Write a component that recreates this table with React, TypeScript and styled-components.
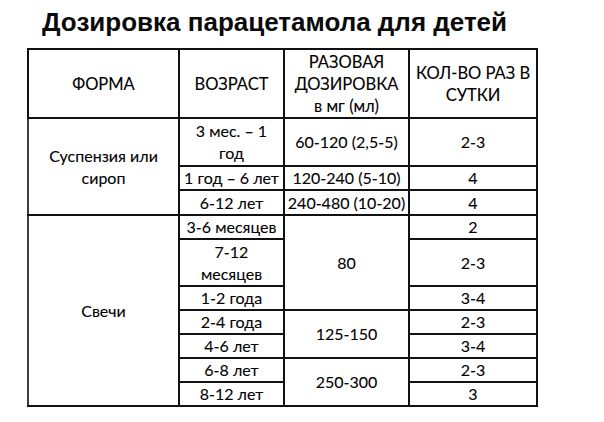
import React from 'react';
import styled, { createGlobalStyle } from 'styled-components';

const GlobalStyle = createGlobalStyle`
  html, body {
    margin: 0;
    padding: 0;
    background: #ffffff;
  }
  body {
    width: 604px;
    height: 422px;
    overflow: hidden;
    font-family: Lato, "Noto Sans", sans-serif;
    color: #000;
  }
`;

const Page = styled.main`
  display: flex;
  flex-direction: column;
  align-items: flex-start;
  padding: 7px 0 0 27px;
`;

const Title = styled.h1`
  margin: 0 0 11px 15px;
  font-family: "Liberation Sans", Arial, sans-serif;
  font-weight: bold;
  font-size: 26px;
  line-height: 30px;
  color: #0a0a0a;
  white-space: nowrap;
`;

const Table = styled.table`
  width: 511px;
  table-layout: fixed;
  border-collapse: collapse;
  border-top: 2px solid #111;
  border-right: 2px solid #111;
  border-left: 2px solid #3c3c3c;
  border-bottom: 2px solid #3c3c3c;
`;

const Row = styled.tr<{ $h: number }>`
  height: ${(p) => p.$h}px;
`;

const HeadCell = styled.th`
  padding: 0 2px;
  border: 2px solid #111;
  font-weight: normal;
  font-size: 16.5px;
  line-height: 22px;
  text-align: center;
  vertical-align: middle;
  text-transform: uppercase;
  white-space: nowrap;
  -webkit-text-stroke: 0.1px #000;
`;

const Cell = styled.td<{ $edge?: boolean }>`
  padding: 0 2px;
  border: 2px solid #111;
  ${(p) => (p.$edge ? 'border-left-color: #3c3c3c;' : '')}
  font-size: 16px;
  line-height: 22px;
  text-align: center;
  vertical-align: middle;
  white-space: nowrap;
  -webkit-text-stroke: 0.1px #000;
`;

const Lower = styled.span`
  text-transform: none;
`;

type DoseRow = {
  h: number;
  form?: { text: React.ReactNode; span: number };
  age: React.ReactNode;
  dose?: { text: string; span: number };
  times: string;
};

const rows: DoseRow[] = [
  { h: 48, form: { text: <>Суспензия или<br />сироп</>, span: 3 }, age: <>3 мес. – 1<br />год</>, dose: { text: '60-120 (2,5-5)', span: 1 }, times: '2-3' },
  { h: 24, age: '1 год – 6 лет', dose: { text: '120-240 (5-10)', span: 1 }, times: '4' },
  { h: 25, age: '6-12 лет', dose: { text: '240-480 (10-20)', span: 1 }, times: '4' },
  { h: 24, form: { text: 'Свечи', span: 7 }, age: '3-6 месяцев', dose: { text: '80', span: 3 }, times: '2' },
  { h: 47, age: <>7-12<br />месяцев</>, times: '2-3' },
  { h: 24, age: '1-2 года', times: '3-4' },
  { h: 24, age: '2-4 года', dose: { text: '125-150', span: 2 }, times: '2-3' },
  { h: 24, age: '4-6 лет', times: '3-4' },
  { h: 24, age: '6-8 лет', dose: { text: '250-300', span: 2 }, times: '2-3' },
  { h: 24, age: '8-12 лет', times: '3' },
];

export default function App() {
  return (
    <>
      <GlobalStyle />
      <Page>
        <Title>Дозировка парацетамола для детей</Title>
        <Table>
          <colgroup>
            <col style={{ width: 151 }} />
            <col style={{ width: 105 }} />
            <col style={{ width: 125 }} />
            <col style={{ width: 128 }} />
          </colgroup>
          <thead>
            <Row $h={69}>
              <HeadCell>Форма</HeadCell>
              <HeadCell>Возраст</HeadCell>
              <HeadCell>
                Разовая<br />дозировка<br /><Lower>в мг (мл)</Lower>
              </HeadCell>
              <HeadCell>Кол-во раз в<br />сутки</HeadCell>
            </Row>
          </thead>
          <tbody>
            {rows.map((r, i) => (
              <Row key={i} $h={r.h}>
                {r.form && (
                  <Cell $edge rowSpan={r.form.span}>
                    {r.form.text}
                  </Cell>
                )}
                <Cell>{r.age}</Cell>
                {r.dose && <Cell rowSpan={r.dose.span}>{r.dose.text}</Cell>}
                <Cell>{r.times}</Cell>
              </Row>
            ))}
          </tbody>
        </Table>
      </Page>
    </>
  );
}
